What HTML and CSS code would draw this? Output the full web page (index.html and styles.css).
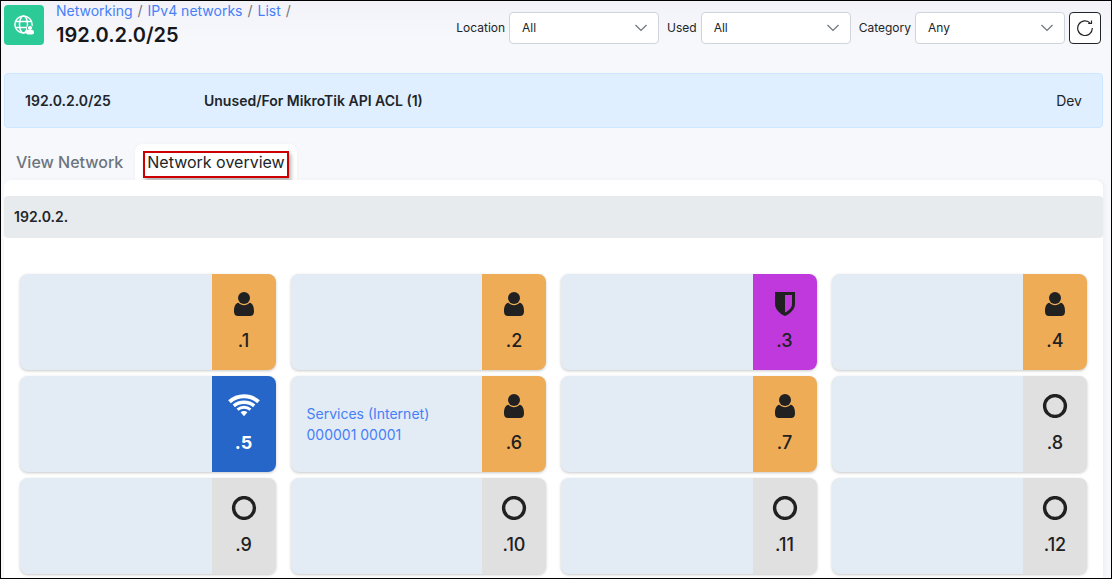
FILE: index.html
```html
<!DOCTYPE html>
<html lang="en">
<head>
<meta charset="utf-8">
<title>192.0.2.0/25</title>
<link rel="stylesheet" href="styles.css">
</head>
<body>
<svg class="sprite" aria-hidden="true">
  <symbol id="user" viewBox="0 0 20 24"><circle cx="10" cy="6" r="6"/><path d="M4.300 10.800C1.300 11.500 0 14.500 0 19.500C0 22.500 1.500 24 4 24H16C18.500 24 20 22.500 20 19.500C20 14.500 18.700 11.500 15.700 10.800C14 12.500 12.200 13.200 10 13.200S6 12.500 4.300 10.800Z"/></symbol>
  <symbol id="shield" viewBox="0 0 20 24"><path fill-rule="evenodd" d="M0 0H20V12C20 17 16 21.300 10 24C4 21.300 0 17 0 12ZM10 3V20.600C14.500 18.200 17 15.500 17 12V3Z"/></symbol>
  <symbol id="wifi" viewBox="0 0 32 24"><path d="M16 17Q18 17 19.400 18.200L16 22.300L12.600 18.200Q14 17 16 17Z"/><g fill="none" stroke="currentColor"><path stroke-width="4" d="M1.500 7.800Q7.500 2.300 16 2.300T30.500 7.800"/><path stroke-width="3.400" d="M5.800 11.900Q10 8.200 16 8.200T26.200 11.900"/><path stroke-width="3" d="M9.500 15.600Q12.500 13.300 16 13.300T22.500 15.600"/></g></symbol>
  <symbol id="ring" viewBox="0 0 24 24"><circle cx="12" cy="12" r="10.400" fill="none" stroke="currentColor" stroke-width="3.400"/></symbol>
  <symbol id="chevron" viewBox="0 0 12 8"><path d="M.5 1L6 6.500L11.500 1" fill="none" stroke="currentColor" stroke-width="1.200"/></symbol>
</svg>
<div class="page">
  <header class="header">
    <div class="logo">
      <svg viewBox="0 0 20 20" width="20" height="20" fill="none" stroke="#fff" stroke-width="1.500"><circle cx="9.500" cy="9.500" r="8.600"/><ellipse cx="9.500" cy="9.500" rx="4" ry="8.600"/><path d="M1.500 6.500H17.500M1.500 12.500H17.500"/><circle cx="16" cy="13" r="2.600" fill="#fff" stroke="#2bca96" stroke-width="1"/><rect x="12" y="15" width="8" height="4.500" rx="2" fill="#fff" stroke="none"/></svg>
    </div>
    <div class="heading">
      <nav class="crumbs" aria-label="Breadcrumb"><a href="#">Networking</a><span>/</span><a href="#">IPv4 networks</a><span>/</span><a href="#">List</a><span>/</span></nav>
      <h1 class="title">192.0.2.0/25</h1>
    </div>
    <form class="filters">
      <label for="location">Location</label>
      <div class="select"><select id="location"><option>All</option></select><svg class="chevron"><use href="#chevron"/></svg></div>
      <label for="used">Used</label>
      <div class="select"><select id="used"><option>All</option></select><svg class="chevron"><use href="#chevron"/></svg></div>
      <label for="category">Category</label>
      <div class="select"><select id="category"><option>Any</option></select><svg class="chevron"><use href="#chevron"/></svg></div>
      <button class="refresh" type="button" aria-label="Refresh"><svg viewBox="0 0 16 16" width="16" height="16" fill="none" stroke="#222" stroke-width="1.200"><path d="M13.400 3.300A7.300 7.300 0 1 0 15.300 8"/><path d="M11.200 3.500H14.500V.5"/></svg></button>
    </form>
  </header>

  <section class="summary">
    <strong>192.0.2.0/25</strong>
    <strong>Unused/For MikroTik API ACL (1)</strong>
    <span>Dev</span>
  </section>

  <nav class="tabs">
    <a class="tab" href="#">View Network</a>
    <a class="tab active" href="#" aria-current="page"><span class="mark">Network overview</span></a>
  </nav>

  <main class="panel">
    <h2 class="range">192.0.2.</h2>
    <div class="grid">
      <article class="card"><div class="info"></div><div class="host busy"><svg class="icon"><use href="#user"/></svg><span>.1</span></div></article>
      <article class="card"><div class="info"></div><div class="host busy"><svg class="icon"><use href="#user"/></svg><span>.2</span></div></article>
      <article class="card"><div class="info"></div><div class="host guard"><svg class="icon"><use href="#shield"/></svg><span>.3</span></div></article>
      <article class="card"><div class="info"></div><div class="host busy"><svg class="icon"><use href="#user"/></svg><span>.4</span></div></article>
      <article class="card"><div class="info"></div><div class="host wireless"><svg class="icon"><use href="#wifi"/></svg><span>.5</span></div></article>
      <article class="card"><div class="info"><a href="#">Services (Internet)</a><a href="#">000001 00001</a></div><div class="host busy"><svg class="icon"><use href="#user"/></svg><span>.6</span></div></article>
      <article class="card"><div class="info"></div><div class="host busy"><svg class="icon"><use href="#user"/></svg><span>.7</span></div></article>
      <article class="card"><div class="info"></div><div class="host"><svg class="icon"><use href="#ring"/></svg><span>.8</span></div></article>
      <article class="card"><div class="info"></div><div class="host"><svg class="icon"><use href="#ring"/></svg><span>.9</span></div></article>
      <article class="card"><div class="info"></div><div class="host"><svg class="icon"><use href="#ring"/></svg><span>.10</span></div></article>
      <article class="card"><div class="info"></div><div class="host"><svg class="icon"><use href="#ring"/></svg><span>.11</span></div></article>
      <article class="card"><div class="info"></div><div class="host"><svg class="icon"><use href="#ring"/></svg><span>.12</span></div></article>
    </div>
  </main>
</div>
</body>
</html>
```

FILE: styles.css
```css
* { box-sizing: border-box; }
body { margin: 0; font: 14px/20px Inter, "Liberation Sans", sans-serif; color: #212529; }
a { color: #467ff7; text-decoration: none; }
.sprite { display: none; }
.page { display: flex; flex-direction: column; min-height: 100vh; padding: 0 8px 0 3px; border: 1px solid #000; background: linear-gradient(#f2f2f8, #f7f8fc 40px); }

.header { display: flex; align-items: flex-start; gap: 12px; min-height: 72px; }
.logo { display: grid; place-items: center; width: 40px; height: 40px; margin-top: 4px; border-radius: 4px; background: #2bca96; }
.crumbs { display: flex; gap: 5px; color: #6c757d; }
.title { margin: 0; font-size: 20px; line-height: 28px; font-weight: 600; color: #16181b; }
.filters { display: flex; align-items: center; gap: 4px; margin: 11px 2px 0 auto; font-size: 12px; }
.filters label:not(:first-child) { margin-left: 4px; }
.select { display: grid; align-items: center; width: 150px; }
.select select { grid-area: 1 / 1; width: 100%; height: 32px; padding: 0 32px 0 12px; border: 1px solid #ced4da; border-radius: 4px; background: #fff; color: #212529; font: inherit; appearance: none; }
.chevron { grid-area: 1 / 1; justify-self: end; width: 12px; height: 8px; margin-right: 12px; color: #6c757d; pointer-events: none; }
.refresh { display: grid; place-items: center; width: 32px; height: 32px; padding: 0; border: 1px solid #212529; border-radius: 4px; background: #fff; }

.summary { display: grid; grid-template-columns: 179px 1fr auto; align-items: center; min-height: 55px; padding: 0 20px; border: 1px solid #cce7ff; border-radius: 4px; background: #dfefff; }
.summary strong { font-weight: 600; }

.tabs { display: flex; align-items: flex-end; height: 52px; font-size: 16px; line-height: 24px; }
.tab { padding: 6px 12px; font-weight: 500; color: #6c757d; }
.tab.active { padding: 7px 8px 2px; border-radius: 8px 8px 0 0; background: #fff; color: #212529; box-shadow: 0 0 4px #00000008; }
.mark { display: block; padding: 0 2px 4px; border: 2px solid #cc0000; line-height: 19px; font-weight: 400; box-shadow: 2px 3px 4px #0000004d; }

.panel { flex: 1; padding-top: 16px; border-radius: 8px 8px 0 0; background: #fff; box-shadow: 2px 0 4px #0000000a; }
.range { margin: 0; padding: 11px 10px; border-radius: 4px; background: #e7ebee; font-size: 14px; line-height: 20px; font-weight: 600; }
.grid { display: grid; grid-template-columns: repeat(4, 1fr); gap: 6px 15px; padding: 36px 16px 4px; }
.card { display: flex; height: 96px; overflow: hidden; border-radius: 8px; background: #e3ebf5; box-shadow: 0 1px 3px #00000038; }
.info { display: flex; flex: 1; flex-direction: column; justify-content: center; padding: 0 16px; line-height: 21px; }
.host { display: flex; flex-direction: column; align-items: center; width: 64px; padding-top: 18px; gap: 12px; background: #e0e0e0; color: #212121; font-size: 18px; line-height: 26px; font-weight: 500; }
.icon { width: 32px; height: 24px; fill: currentColor; }
.busy { background: #efac56; }
.guard { background: #bf39dc; }
.wireless { background: #2566c8; color: #fff; font-weight: 700; }
```
